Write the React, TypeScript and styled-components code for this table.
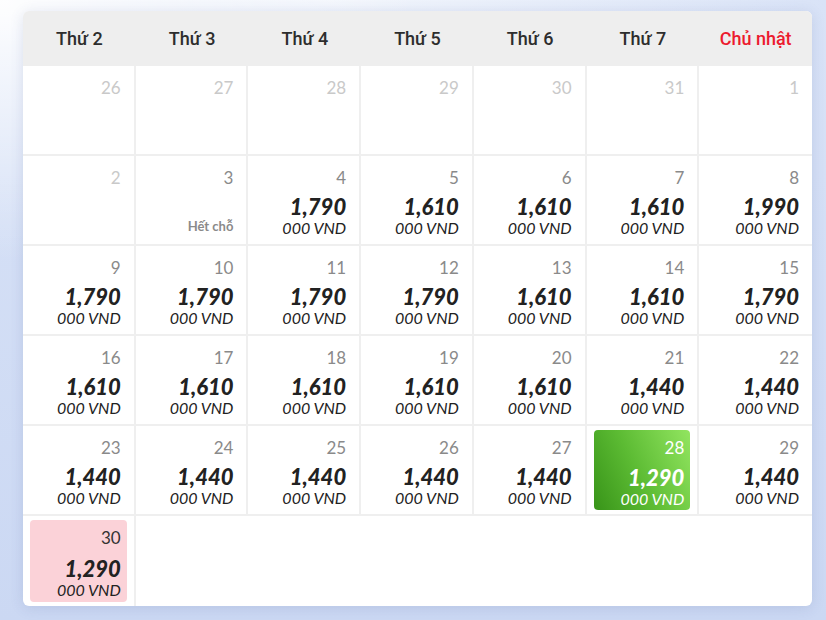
import { FC } from 'react'
import styled, { createGlobalStyle, css } from 'styled-components'

type DayState = 'out' | 'past' | 'soldout' | 'normal' | 'selected' | 'cheapest'

type Day = {
  day: number
  state: DayState
  price?: string
}

const WEEK_DAYS = ['Thứ 2', 'Thứ 3', 'Thứ 4', 'Thứ 5', 'Thứ 6', 'Thứ 7', 'Chủ nhật']

const p = (day: number, price: string, state: DayState = 'normal'): Day => ({ day, price, state })

const DAYS: Day[] = [
  { day: 26, state: 'out' },
  { day: 27, state: 'out' },
  { day: 28, state: 'out' },
  { day: 29, state: 'out' },
  { day: 30, state: 'out' },
  { day: 31, state: 'out' },
  { day: 1, state: 'out' },

  { day: 2, state: 'past' },
  { day: 3, state: 'soldout' },
  p(4, '1,790'),
  p(5, '1,610'),
  p(6, '1,610'),
  p(7, '1,610'),
  p(8, '1,990'),

  p(9, '1,790'),
  p(10, '1,790'),
  p(11, '1,790'),
  p(12, '1,790'),
  p(13, '1,610'),
  p(14, '1,610'),
  p(15, '1,790'),

  p(16, '1,610'),
  p(17, '1,610'),
  p(18, '1,610'),
  p(19, '1,610'),
  p(20, '1,610'),
  p(21, '1,440'),
  p(22, '1,440'),

  p(23, '1,440'),
  p(24, '1,440'),
  p(25, '1,440'),
  p(26, '1,440'),
  p(27, '1,440'),
  p(28, '1,290', 'selected'),
  p(29, '1,440'),

  p(30, '1,290', 'cheapest'),
]

const TOTAL_ROWS = Math.ceil(DAYS.length / 7)

const App: FC = () => {
  return (
    <>
      <GlobalStyle />
      <StyledPage>
        <StyledCard>
          <StyledWeekHeader>
            {WEEK_DAYS.map((name, i) => (
              <StyledDayName key={name} $weekend={i === 6}>
                {name}
              </StyledDayName>
            ))}
          </StyledWeekHeader>

          <StyledGrid>
            {DAYS.map((d, i) => (
              <StyledCell
                key={i}
                $lastCol={i % 7 === 6}
                $lastRow={Math.floor(i / 7) === TOTAL_ROWS - 1}
              >
                <StyledInner $state={d.state}>
                  <StyledDayNumber $state={d.state}>{d.day}</StyledDayNumber>

                  {d.state === 'soldout' && <StyledSoldOut>Hết chỗ</StyledSoldOut>}

                  {d.price && (
                    <StyledPriceBox>
                      <StyledPrice>{d.price}</StyledPrice>
                      <StyledUnit>000 VND</StyledUnit>
                    </StyledPriceBox>
                  )}
                </StyledInner>
              </StyledCell>
            ))}
          </StyledGrid>
        </StyledCard>
      </StyledPage>
    </>
  )
}

export default App

const GlobalStyle = createGlobalStyle`
  html, body {
    margin: 0;
    padding: 0;
  }

  body {
    font-family: Lato, "Liberation Sans", sans-serif;
    color: #222;
    background:
      radial-gradient(ellipse 420px 260px at 0% 0%, rgba(255, 255, 255, 0.95), rgba(255, 255, 255, 0)),
      radial-gradient(ellipse 500px 60px at 40% 0%, rgba(245, 248, 253, 0.9), rgba(245, 248, 253, 0)),
      linear-gradient(180deg, #d9e3f7 0%, #cbd8f3 100%);
    min-height: 100vh;
  }
`

const StyledPage = styled.div`
  padding: 11px 0 0 23px;
  min-height: 620px;
  box-sizing: border-box;
`

const StyledCard = styled.div`
  width: 789px;
  background: #fff;
  border-radius: 6px;
  overflow: hidden;
  box-shadow: 0 2px 14px rgba(60, 80, 140, 0.14);
`

const StyledWeekHeader = styled.div`
  display: grid;
  grid-template-columns: repeat(7, 1fr);
  align-items: center;
  height: 55px;
  background: #eeeeee;
`

const StyledDayName = styled.div<{ $weekend?: boolean }>`
  text-align: center;
  font-family: Roboto, "Liberation Sans", sans-serif;
  font-weight: 500;
  font-size: 18px;
  color: ${({ $weekend }) => ($weekend ? '#ec1b2e' : '#2d2d2d')};
`

const StyledGrid = styled.div`
  display: grid;
  grid-template-columns: repeat(7, 1fr);
`

const StyledCell = styled.div<{ $lastCol?: boolean; $lastRow?: boolean }>`
  box-sizing: border-box;
  height: 90px;
  padding: 4px 7px;
  border-right: ${({ $lastCol }) => ($lastCol ? 'none' : '2px solid #efefef')};
  border-bottom: ${({ $lastRow }) => ($lastRow ? 'none' : '2px solid #efefef')};
`

const StyledInner = styled.div<{ $state: DayState }>`
  box-sizing: border-box;
  height: 100%;
  display: flex;
  flex-direction: column;
  align-items: flex-end;
  padding: 8px 6px 3px;
  border-radius: 4px;
  color: #222;

  ${({ $state }) =>
    $state === 'selected' &&
    css`
      height: 80px;
      padding-bottom: 2px;
      background: linear-gradient(65deg, #389419 0%, #5cbb33 45%, #92e560 100%);
      color: #fff;
    `}

  ${({ $state }) =>
    $state === 'cheapest' &&
    css`
      background: #fbd2d8;
    `}
`

const dayColor: Record<DayState, string> = {
  out: '#c9c9c9',
  past: '#c9c9c9',
  soldout: '#8a8a8a',
  normal: '#8a8a8a',
  selected: '#ffffff',
  cheapest: '#333333',
}

const StyledDayNumber = styled.span<{ $state: DayState }>`
  font-size: 17px;
  line-height: 20px;
  color: ${({ $state }) => dayColor[$state]};
`

const StyledSoldOut = styled.span`
  margin-top: auto;
  margin-bottom: 3px;
  font-size: 13px;
  font-weight: 700;
  color: #8a8a8a;
`

const StyledPriceBox = styled.div`
  margin-top: auto;
  display: flex;
  flex-direction: column;
  align-items: flex-end;
`

const StyledPrice = styled.span`
  font-size: 22px;
  line-height: 24px;
  font-weight: 900;
  font-style: italic;
`

const StyledUnit = styled.span`
  font-size: 16px;
  line-height: 18px;
  font-style: italic;
`
